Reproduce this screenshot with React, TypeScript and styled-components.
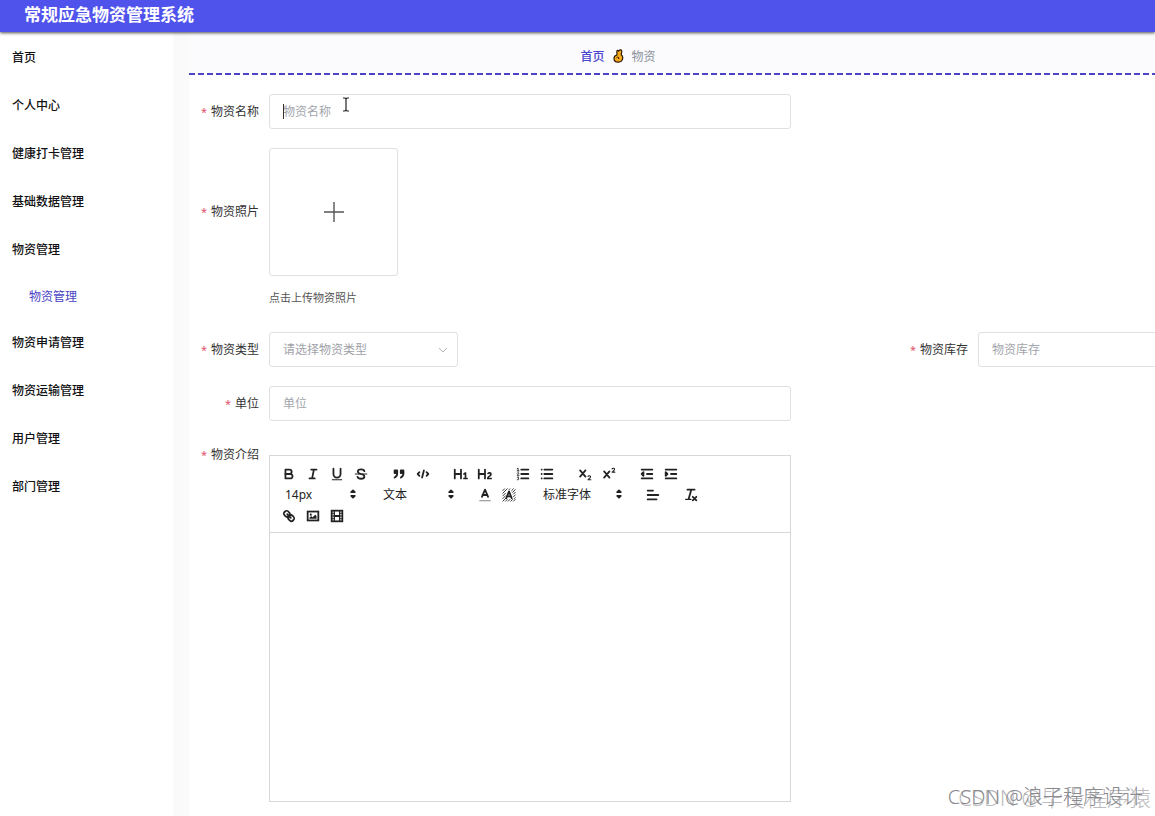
import React from "react";
import styled, { createGlobalStyle, css } from "styled-components";

const Global = createGlobalStyle`
  * { box-sizing: border-box; }
  body {
    margin: 0;
    overflow: hidden;
    background: #fff;
    color: #333;
    font-family: "Noto Sans", "Noto Sans CJK SC", sans-serif;
    font-size: 12px;
  }
  button, input, select { font: inherit; color: inherit; }
`;

const Page = styled.div`
  position: relative;
  display: flex;
  flex-direction: column;
  height: 100vh;
  overflow: hidden;
`;

const Header = styled.header`
  flex: none;
  z-index: 1;
  height: 32px;
  padding: 0 24px;
  background: #5052ec;
  box-shadow: 0 1px 3px rgba(0, 0, 0, 0.7);
`;

const Title = styled.h1`
  margin: 0;
  color: #fff;
  font-size: 17px;
  font-weight: 700;
  line-height: 30px;
`;

const Body = styled.div`
  flex: 1;
  display: flex;
  min-height: 0;
`;

const Sidebar = styled.nav`
  flex: none;
  width: 173px;
  padding-top: 2px;
  background: #fff;
`;

const Menu = styled.ul`
  margin: 0;
  padding: 0;
  list-style: none;
`;

const MenuLink = styled.a<{ $sub?: boolean }>`
  display: block;
  padding-left: ${(p) => (p.$sub ? 29 : 12)}px;
  color: ${(p) => (p.$sub ? "#4a43c4" : "#111")};
  font-weight: ${(p) => (p.$sub ? 400 : 500)};
  line-height: ${(p) => (p.$sub ? 45 : 48)}px;
  text-decoration: none;
`;

const Main = styled.main`
  flex: 1;
  min-width: 0;
  padding-left: 16px;
  background: #fafafb;
  overflow: hidden;
`;

const Breadcrumb = styled.nav`
  display: flex;
  align-items: center;
  justify-content: center;
  gap: 8px;
  height: 43px;
  padding: 4px 108px 0 0;
  background:
    repeating-linear-gradient(90deg, #4b44c6 0 6px, transparent 6px 9px) left bottom / 100% 2px no-repeat,
    #fbfbfe;
`;

const CrumbLink = styled.a`
  color: #4a45cf;
  font-weight: 500;
  text-decoration: none;
`;

const CrumbText = styled.span`
  color: #8c929a;
`;

const Form = styled.form`
  display: flex;
  flex-direction: column;
  gap: 19px;
  min-height: 100%;
  padding-top: 19px;
  background: #fff;
`;

const Row = styled.div`
  display: grid;
  grid-template-columns: 709px minmax(0, 1fr);
`;

const Field = styled.div<{ $top?: boolean }>`
  display: flex;
  align-items: ${(p) => (p.$top ? "flex-start" : "center")};
`;

const Label = styled.label<{ $tall?: boolean }>`
  flex: none;
  width: 80px;
  padding-right: 10px;
  line-height: ${(p) => (p.$tall ? 128 : 30)}px;
  text-align: right;
  white-space: nowrap;
  &::before {
    content: "*";
    margin-right: 4px;
    color: #e0526a;
    font-size: 11px;
  }
`;

const outline = css`
  border: 1px solid #dfe0e4;
  border-radius: 3px;
  background: #fff;
`;

const TextInput = styled.input`
  ${outline}
  flex: none;
  width: 522px;
  height: 35px;
  padding: 0 13px;
  outline: none;
  &::placeholder { color: #a3a5ac; opacity: 1; }
`;

const InputBox = styled.div`
  position: relative;
`;

const Caret = styled.span`
  position: absolute;
  top: 10px;
  left: 14px;
  width: 1px;
  height: 15px;
  background: #333;
`;

const SelectBox = styled.div`
  position: relative;
  width: 189px;
`;

const Select = styled.select`
  ${outline}
  display: block;
  width: 100%;
  height: 35px;
  padding: 0 13px;
  color: #a0a2a8;
  appearance: none;
`;

const Chevron = styled.svg`
  position: absolute;
  top: 13px;
  right: 10px;
  pointer-events: none;
`;

const Upload = styled.button`
  ${outline}
  display: grid;
  place-items: center;
  width: 129px;
  height: 128px;
  padding: 0;
`;

const Hint = styled.p`
  margin: 12px 0 5px;
  color: #555;
  font-size: 11px;
  line-height: 20px;
`;

const Editor = styled.section`
  width: 522px;
  margin-top: 15px;
  border: 1px solid #d8d8da;
`;

const Toolbar = styled.div`
  display: flex;
  flex-wrap: wrap;
  padding: 7px 7px 6px;
  border-bottom: 1px solid #d8d8da;
`;

const Group = styled.div`
  display: flex;
  height: 21px;
  margin-right: 14px;
`;

const Tool = styled.button`
  display: grid;
  place-items: center;
  width: 24px;
  height: 21px;
  padding: 0;
  border: 0;
  background: none;
  color: #222;
`;

const Picker = styled.div<{ $wide?: boolean }>`
  position: relative;
  width: ${(p) => (p.$wide ? 92 : 84)}px;
  color: #222;
  select {
    width: 100%;
    height: 21px;
    padding: 0 8px;
    border: 0;
    background: none;
    appearance: none;
  }
  svg {
    position: absolute;
    top: 2px;
    right: 0;
    pointer-events: none;
  }
`;

const Content = styled.div`
  height: 268px;
  padding: 12px;
  outline: none;
`;

const Watermark = styled.div`
  position: absolute;
  right: 4px;
  bottom: 4px;
  display: grid;
  justify-items: end;
  line-height: 30px;
  font-weight: 300;
  white-space: nowrap;
  pointer-events: none;
`;

const Mark = styled.span<{ $front?: boolean }>`
  grid-area: 1 / 1;
  padding-right: ${(p) => (p.$front ? 8 : 0)}px;
  color: ${(p) => (p.$front ? "#8a8a8e" : "#bcbcc0")};
  font-size: ${(p) => (p.$front ? 20 : 22)}px;
`;

const Pointer = styled.svg`
  position: absolute;
  top: 97px;
  left: 342px;
  pointer-events: none;
`;

const Glyph = ({ children }: { children: React.ReactNode }) => (
  <svg width="16" height="16" viewBox="0 0 18 18" fill="none" stroke="currentColor" strokeWidth="2" strokeLinecap="round" strokeLinejoin="round">
    {children}
  </svg>
);

const F = { fill: "currentColor", stroke: "none" };

const icons: Record<string, React.ReactNode> = {
  bold: <><path d="M5,4H9.5A2.5,2.5,0,0,1,12,6.5v0A2.5,2.5,0,0,1,9.5,9H5V4Z" /><path d="M5,9h5.5A2.5,2.5,0,0,1,13,11.5v0A2.5,2.5,0,0,1,10.5,14H5V9Z" /></>,
  italic: <><path d="M7 4H13M5 14H11M8 14L10 4" /></>,
  underline: <><path d="M5,3V9a4,4,0,0,0,8,0V3" /><rect {...F} x="3" y="15" width="12" height="1" rx=".5" /></>,
  strike: <><path strokeWidth="1.2" d="M2.5 9H15.5" /><path d="M12.8 5.8C12 3.2 5.6 3 5.4 6.2C5.4 8 7 8.5 9 9C11 9.4 12.8 10 12.8 12C12.6 15.2 5.8 15 5 12.2" /></>,
  quote: <><rect fill="currentColor" x="4" y="5" width="3" height="3" /><rect fill="currentColor" x="11" y="5" width="3" height="3" /><path d="M7,8c0,4.031-3,5-3,5M14,8c0,4.031-3,5-3,5" /></>,
  code: <path d="M5 7L3 9L5 11M13 7L15 9L13 11M10 5L8 13" />,
  h1: <path {...F} d="M10,4V14a1,1,0,0,1-2,0V10H3v4a1,1,0,0,1-2,0V4A1,1,0,0,1,3,4V8H8V4a1,1,0,0,1,2,0Zm6.06787,9.209H14.98975V7.59863a.54085.54085,0,0,0-.605-.60547h-.62744a1.01119,1.01119,0,0,0-.748.29688L11.645,8.56641a.5435.5435,0,0,0-.022.8584l.28613.30762a.53861.53861,0,0,0,.84717.0332l.09912-.08789a1.2137,1.2137,0,0,0,.2417-.35254h.02246s-.01123.30859-.01123.60547V13.209H12.041a.54085.54085,0,0,0-.605.60547v.43945a.54085.54085,0,0,0,.605.60547h4.02686a.54085.54085,0,0,0,.605-.60547v-.43945A.54085.54085,0,0,0,16.06787,13.209Z" />,
  h2: <path {...F} d="M16.73975,13.81445v.43945a.54085.54085,0,0,1-.605.60547H11.855a.58392.58392,0,0,1-.64893-.60547V14.0127c0-2.90527,3.39941-3.42187,3.39941-4.55469a.77675.77675,0,0,0-.84717-.78125,1.17684,1.17684,0,0,0-.83594.38477c-.2749.26367-.561.374-.85791.13184l-.4292-.34082c-.30811-.24219-.38525-.51758-.1543-.81445a2.97155,2.97155,0,0,1,2.45361-1.17676,2.45393,2.45393,0,0,1,2.68408,2.40918c0,2.45312-3.1792,2.92676-3.27832,3.93848h2.79443A.54085.54085,0,0,1,16.73975,13.81445ZM9,3A.99974.99974,0,0,0,8,4V8H3V4A1,1,0,0,0,1,4V14a1,1,0,0,0,2,0V10H8v4a1,1,0,0,0,2,0V4A.99974.99974,0,0,0,9,3Z" />,
  ordered: <><path d="M7 4H15M7 9H15M7 14H15" /><path strokeWidth="1" d="M2.5 5.5H4.5M3.5 5.5V2.5L2.5 3M2.5 8C3 7 4.5 7.3 4.3 8.2L2.5 10.5H4.5M2.5 12.5H4.2L3.5 14C5 14 4.8 15.8 2.5 15.5" /></>,
  bullet: <path d="M6 4H15M6 9H15M6 14H15M3 4V4M3 9V9M3 14V14" />,
  sub: <><path d="M3.5 5L9.5 12M9.5 5L3.5 12" /><path strokeWidth="1.2" d="M12.4 11.8C13 10.4 15.6 10.8 15.2 12.6C15 13.6 13 14.5 12.4 15.4H15.6" /></>,
  sup: <><path d="M3.5 6L9.5 13M9.5 6L3.5 13" /><path strokeWidth="1.2" d="M12.4 3.3C13 1.9 15.6 2.3 15.2 4.1C15 5.1 13 6 12.4 6.9H15.6" /></>,
  outdent: <><path d="M3 14H15M3 4H15M9 9H15" /><path fill="currentColor" d="M5 7V11L3 9Z" /></>,
  indent: <><path d="M3 14H15M3 4H15M9 9H15" /><path fill="currentColor" d="M3 7V11L5 9Z" /></>,
  color: <><path strokeWidth="1.2" stroke="#888" d="M3 15.5H15" /><path d="M5.5 11L9 3L12.5 11M11.6 9H6.4" /></>,
  background: <><path strokeWidth="1" d="M2 4L4 2M2 7L7 2M2 10L5 7M2 13L5 10M2 16L6 12M9 3L10 2M12 4L14 2M13 6L16 3M14 8L16 6M14 11L16 9M15 13L16 12M5 16L7 14M8 16L10 14M11 16L13 14M14 16L16 14" /><path d="M6 12.5L9 5L12 12.5M11 10.5H7" /></>,
  align: <path d="M3 9H15M3 14H13M3 4H9" />,
  clean: <><path d="M5 3H13M6.5 13L9.3 3" /><path strokeWidth="1.4" d="M3 14H9" /><path d="M11 11L15 15M15 11L11 15" /></>,
  link: <><path d="M7 7L11 11" /><path d="M8.9 4.577a3.476 3.476 0 0 1 .36 4.679A3.476 3.476 0 0 1 4.577 8.9C3.185 7.5 2.035 6.4 4.217 4.217S7.5 3.185 8.9 4.577Z" /><path d="M13.423 9.1a3.476 3.476 0 0 0-4.679-.36 3.476 3.476 0 0 0 .36 4.679c1.392 1.392 2.5 2.542 4.679.36S14.815 10.5 13.423 9.1Z" /></>,
  image: <><rect x="3" y="4" width="12" height="10" strokeLinejoin="miter" /><circle {...F} cx="6.5" cy="7.5" r="1.2" /><path {...F} d="M5 12V11L7 9L8.5 10.5L11.5 7.5L13 9V12Z" /></>,
  video: <><rect x="3" y="3" width="12" height="12" strokeLinejoin="miter" /><path strokeWidth="1.4" d="M6 3V15M12 3V15" /><path d="M6 9H12" /><path strokeWidth="1" d="M3 6H6M3 9H6M3 12H6M12 6H15M12 9H15M12 12H15" /></>,
};

const Tools = ({ names }: { names: string[] }) => (
  <>
    {names.map((n) => (
      <Tool key={n} type="button" aria-label={n}><Glyph>{icons[n]}</Glyph></Tool>
    ))}
  </>
);

const FormatPicker = ({ label, value, wide }: { label: string; value: string; wide?: boolean }) => (
  <Group>
    <Picker $wide={wide}>
      <select aria-label={label}><option>{value}</option></select>
      <svg width="16" height="16" viewBox="0 0 18 18" fill="#222" stroke="#222" strokeWidth="2" strokeLinejoin="round">
        <path d="M7 11L9 13L11 11ZM7 7L9 5L11 7Z" />
      </svg>
    </Picker>
  </Group>
);

const before = ["首页", "个人中心", "健康打卡管理", "基础数据管理", "物资管理"];
const after = ["物资申请管理", "物资运输管理", "用户管理", "部门管理"];

export default function App() {
  return (
    <Page>
      <Global />
      <Header><Title>常规应急物资管理系统</Title></Header>
      <Body>
        <Sidebar>
          <Menu>
            {before.map((t) => <li key={t}><MenuLink href="#">{t}</MenuLink></li>)}
            <li><MenuLink href="#" $sub>物资管理</MenuLink></li>
            {after.map((t) => <li key={t}><MenuLink href="#">{t}</MenuLink></li>)}
          </Menu>
        </Sidebar>
        <Main>
          <Breadcrumb>
            <CrumbLink href="#">首页</CrumbLink>
            <svg width="11" height="14" viewBox="0 0 11 14" stroke="#2c1b05" strokeWidth="1.2" strokeLinejoin="round">
              <path fill="#f7a91c" d="M4 6L3.8 2.4C3.8 1 5.4 1 5.6 2.2L6.2 1.4C7 .4 9 .8 8.8 2.4L8.2 5.8C9.8 7 10 9 9.4 10.6C8.6 12.6 6.8 13.2 5 13.2C2.4 13.2 1 11.4 1 9.4C1 7.6 2 6.4 4 6Z" />
              <path fill="none" strokeWidth="1" d="M3.6 8.6C5 7.6 6.4 8.4 5.6 10" />
            </svg>
            <CrumbText>物资</CrumbText>
          </Breadcrumb>
          <Form>
            <Field>
              <Label htmlFor="name">物资名称</Label>
              <InputBox>
                <TextInput id="name" placeholder="物资名称" />
                <Caret />
              </InputBox>
            </Field>
            <Field $top>
              <Label as="span" id="photo" $tall>物资照片</Label>
              <div>
                <Upload type="button" aria-labelledby="photo">
                  <svg width="22" height="22" viewBox="0 0 22 22" stroke="#555" strokeWidth="1.4"><path d="M11 1V21M1 11H21" /></svg>
                </Upload>
                <Hint>点击上传物资照片</Hint>
              </div>
            </Field>
            <Row>
              <Field>
                <Label htmlFor="kind">物资类型</Label>
                <SelectBox>
                  <Select id="kind"><option>请选择物资类型</option></Select>
                  <Chevron width="10" height="10" viewBox="0 0 10 10" fill="none" stroke="#b4b6bb"><path d="M1 3L5 7L9 3" /></Chevron>
                </SelectBox>
              </Field>
              <Field>
                <Label htmlFor="stock">物资库存</Label>
                <TextInput id="stock" placeholder="物资库存" />
              </Field>
            </Row>
            <Field>
              <Label htmlFor="unit">单位</Label>
              <TextInput id="unit" placeholder="单位" />
            </Field>
            <Field $top>
              <Label as="span" id="intro">物资介绍</Label>
              <Editor>
                <Toolbar>
                  <Group><Tools names={["bold", "italic", "underline", "strike"]} /></Group>
                  <Group><Tools names={["quote", "code"]} /></Group>
                  <Group><Tools names={["h1", "h2"]} /></Group>
                  <Group><Tools names={["ordered", "bullet"]} /></Group>
                  <Group><Tools names={["sub", "sup"]} /></Group>
                  <Group><Tools names={["outdent", "indent"]} /></Group>
                  <FormatPicker label="字号" value="14px" />
                  <FormatPicker label="标题" value="文本" />
                  <Group><Tools names={["color", "background"]} /></Group>
                  <FormatPicker label="字体" value="标准字体" wide />
                  <Group><Tools names={["align"]} /></Group>
                  <Group><Tools names={["clean"]} /></Group>
                  <Group><Tools names={["link", "image", "video"]} /></Group>
                </Toolbar>
                <Content role="textbox" aria-labelledby="intro" contentEditable suppressContentEditableWarning />
              </Editor>
            </Field>
          </Form>
        </Main>
      </Body>
      <Pointer width="8" height="15" viewBox="0 0 8 15" fill="none" stroke="#222" strokeWidth="1.2">
        <path d="M1 1H3L4 2L5 1H7M4 2V13M1 14H3L4 13L5 14H7" />
      </Pointer>
      <Watermark>
        <Mark>CSDN @毕设程序猿</Mark>
        <Mark $front>CSDN @浪子程序设计</Mark>
      </Watermark>
    </Page>
  );
}
